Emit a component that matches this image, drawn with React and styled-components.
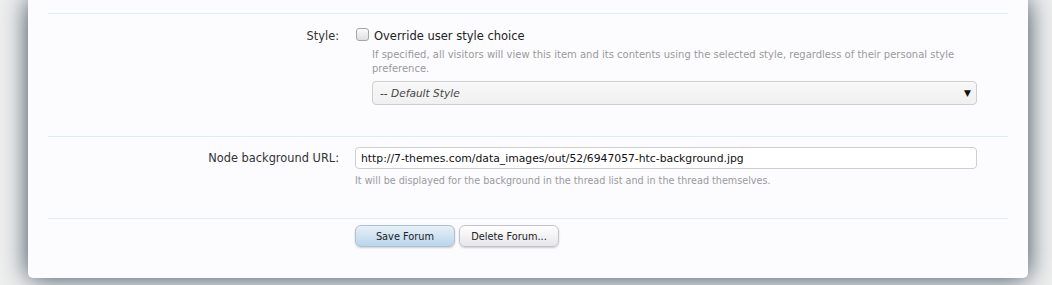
import React from "react";
import styled, { createGlobalStyle } from "styled-components";

const Global = createGlobalStyle`
  html, body { margin: 0; padding: 0; background: #efefef; }
  body { font-family: "DejaVu Sans", Tahoma, sans-serif; overflow: hidden; }
`;

const Page = styled.div`
  width: 1052px;
  height: 285px;
  padding: 0 24px 0 28px;
  box-sizing: border-box;
  overflow: hidden;
`;

const Panel = styled.div`
  width: 1000px;
  background: #fcfcff;
  border-radius: 0 0 5px 5px;
  box-shadow: 0 0 26px rgba(35, 55, 70, 0.9);
  padding: 0 20px 31px;
  box-sizing: border-box;
`;

const TopSpacer = styled.div`
  height: 13px;
  border-bottom: 1px solid #dfecef;
`;

const Row = styled.div`
  display: grid;
  grid-template-columns: 291px 1fr;
  column-gap: 16px;
  padding: ${(p) => p.$pad};
  padding-right: 31px;
  border-bottom: ${(p) => (p.$noLine ? "none" : "1px solid #dfecef")};
`;

const Label = styled.div`
  text-align: right;
  font-size: 11.4px;
  color: #333;
  padding-top: ${(p) => p.$top || "0px"};
  line-height: 16px;
`;

const Controls = styled.div`
  display: flex;
  flex-direction: column;
  align-items: stretch;
`;

const CheckLine = styled.label`
  display: flex;
  align-items: flex-start;
  font-size: 11.5px;
  color: #222;
  line-height: 16px;
`;

const Box = styled.span`
  width: 11px;
  height: 11px;
  border: 1px solid #a6a6a6;
  border-radius: 3px;
  background: linear-gradient(#fafafa, #dedede);
  margin: 0 5px 0 1px;
  flex: none;
`;

const Hint = styled.div`
  font-size: ${(p) => p.$fs || "10px"};
  color: #9a9a9a;
  line-height: 14px;
  padding-left: ${(p) => p.$indent || "0px"};
  margin-top: ${(p) => p.$mt || "0px"};
`;

const Select = styled.div`
  margin: 5px 0 0 17px;
  height: 22px;
  border: 1px solid #cfcfcf;
  border-radius: 4px;
  background: linear-gradient(#f8f8f8, #f0f0f0);
  display: flex;
  align-items: center;
  justify-content: space-between;
  padding: 0 5px 0 7px;
  font-size: 10.6px;
  font-style: italic;
  color: #444;
`;

const Arrow = styled.span`
  font-size: 9px;
  font-style: normal;
  color: #111;
`;

const Input = styled.div`
  height: 20px;
  border: 1px solid #cfcfcf;
  border-radius: 4px;
  background: #fff;
  display: flex;
  align-items: center;
  padding: 0 5px;
  font-size: 10.8px;
  color: #111;
`;

const Buttons = styled.div`
  display: flex;
  gap: 4px;
`;

const Button = styled.div`
  box-sizing: border-box;
  height: 22px;
  border-radius: 6px;
  border: 1px solid ${(p) => (p.$primary ? "#a9c2d4" : "#c4c4cc")};
  background: ${(p) =>
    p.$primary
      ? "linear-gradient(#e7f0f8, #bad5ea)"
      : "linear-gradient(#ffffff, #e6e6ea)"};
  box-shadow: 0 1px 2px rgba(0, 0, 0, 0.2);
  font-size: 9.8px;
  color: #222;
  display: flex;
  align-items: center;
  justify-content: center;
  width: ${(p) => p.$w};
`;

export default function App() {
  return (
    <>
      <Global />
      <Page>
        <Panel>
          <TopSpacer />
          <Row $pad="14px 0 31px">
            <Label $top="-1px">Style:</Label>
            <Controls>
              <CheckLine>
                <Box />
                Override user style choice
              </CheckLine>
              <Hint $indent="17px" $mt="4px">
                If specified, all visitors will view this item and its contents using the selected style, regardless of their personal style preference.
              </Hint>
              <Select>
                -- Default Style
                <Arrow>▼</Arrow>
              </Select>
            </Controls>
          </Row>
          <Row $pad="10px 0 30px">
            <Label $top="3px">Node background URL:</Label>
            <Controls>
              <Input>http://7-themes.com/data_images/out/52/6947057-htc-background.jpg</Input>
              <Hint $mt="5px" $fs="9.65px">
                It will be displayed for the background in the thread list and in the thread themselves.
              </Hint>
            </Controls>
          </Row>
          <Row $pad="6px 0 0" $noLine>
            <div />
            <Buttons>
              <Button $primary $w="100px">Save Forum</Button>
              <Button $w="100px">Delete Forum...</Button>
            </Buttons>
          </Row>
        </Panel>
      </Page>
    </>
  );
}
